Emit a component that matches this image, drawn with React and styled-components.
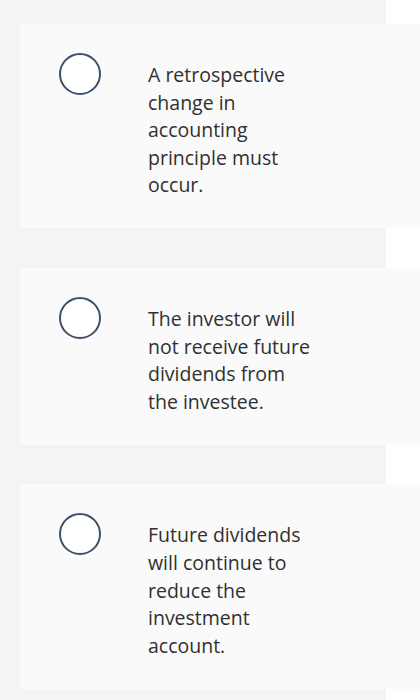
import React from 'react';
import styled, { createGlobalStyle } from 'styled-components';

const GlobalStyle = createGlobalStyle`
  body {
    margin: 0;
    background: #ffffff;
    font-family: "Open Sans", "Liberation Sans", sans-serif;
  }
`

const Column = styled.div`
  width: 386px;
  min-height: 700px;
  background: #f4f4f4;
  padding: 24px 0 20px;
  box-sizing: border-box;
  display: flex;
  flex-direction: column;
  gap: 39.5px;
`

const Option = styled.label`
  width: 400px;
  margin-left: 20px;
  background: #fafafa;
  display: flex;
  align-items: flex-start;
  padding: 29px 0 29.5px 39px;
  box-sizing: border-box;
  cursor: pointer;
`

const Radio = styled.span`
  flex: none;
  width: 42px;
  height: 42px;
  border-radius: 50%;
  border: 2px solid #3e5069;
  background: #ffffff;
  box-sizing: border-box;
`

const Text = styled.div`
  width: 166px;
  margin-left: 47px;
  margin-top: 8px;
  font-size: 19.5px;
  line-height: 27.6px;
  color: #303030;
`

const options = [
  'A retrospective change in accounting principle must occur.',
  'The investor will not receive future dividends from the investee.',
  'Future dividends will continue to reduce the investment account.',
]

const App = () => {
  return (
    <>
      <GlobalStyle />
      <Column>
        {options.map((text) => (
          <Option key={text}>
            <Radio />
            <Text>{text}</Text>
          </Option>
        ))}
      </Column>
    </>
  )
}

export default App;
